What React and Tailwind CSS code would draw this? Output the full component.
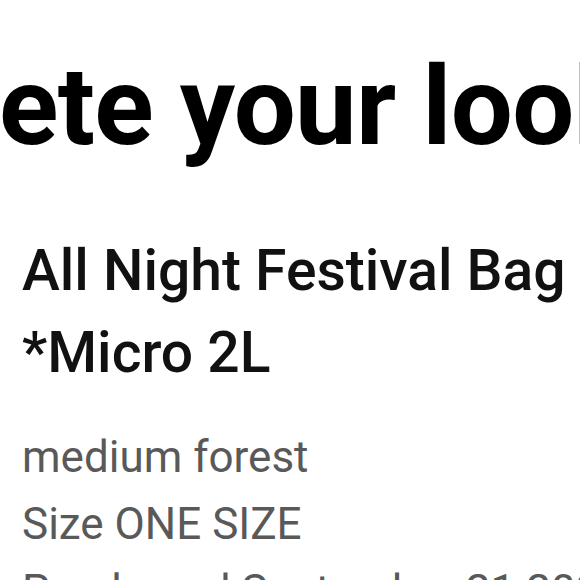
import React from "react";

const App = () => {
  return (
    <div className="w-[580px] h-[580px] overflow-hidden bg-white font-['Roboto',sans-serif]">
      {/* Section heading, cut off at both sides */}
      <section className="pt-[52px]">
        <h2 className="ml-[-318px] whitespace-nowrap text-[110px] leading-none font-bold tracking-[-0.006em] text-black">
          Complete your look
        </h2>
      </section>

      {/* Product details */}
      <div className="px-[22px] pt-[68px]">
        <h3 className="whitespace-nowrap text-[57px] leading-[82px] font-medium text-[#111111]">
          All Night Festival Bag
          <br />
          *Micro 2L
        </h3>
        <div className="mt-[30px] text-[44px] leading-[67px] text-[#595959] whitespace-nowrap">
          <p>medium forest</p>
          <p>Size ONE SIZE</p>
          <p>Purchased September 21 2023</p>
        </div>
      </div>
    </div>
  );
};

export default App;
